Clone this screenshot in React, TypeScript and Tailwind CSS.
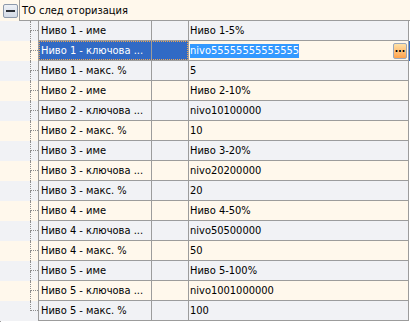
const rows = [
  { label: 'Ниво 1 - име', value: 'Ниво 1-5%' },
  { label: 'Ниво 1 - ключова ...', value: 'nivo55555555555555', editing: true },
  { label: 'Ниво 1 - макс. %', value: '5' },
  { label: 'Ниво 2 - име', value: 'Ниво 2-10%' },
  { label: 'Ниво 2 - ключова ...', value: 'nivo10100000' },
  { label: 'Ниво 2 - макс. %', value: '10' },
  { label: 'Ниво 3 - име', value: 'Ниво 3-20%' },
  { label: 'Ниво 3 - ключова ...', value: 'nivo20200000' },
  { label: 'Ниво 3 - макс. %', value: '20' },
  { label: 'Ниво 4 - име', value: 'Ниво 4-50%' },
  { label: 'Ниво 4 - ключова ...', value: 'nivo50500000' },
  { label: 'Ниво 4 - макс. %', value: '50' },
  { label: 'Ниво 5 - име', value: 'Ниво 5-100%' },
  { label: 'Ниво 5 - ключова ...', value: 'nivo1001000000' },
  { label: 'Ниво 5 - макс. %', value: '100' },
];

export default function App() {
  return (
    <div className="w-[410px] h-[322px] bg-white text-[11px] text-black font-['DejaVu_Sans_Condensed','DejaVu_Sans',sans-serif] leading-none overflow-hidden">
      {/* Category header */}
      <div className="flex h-[21px] bg-[#fff8ec]">
        <div className="w-[19px] pt-[4px] pl-[3px]">
          <div className="w-[15px] h-[14px] rounded-[2px] border border-[#8d99ab] bg-gradient-to-b from-[#eef1f6] to-[#d3dae6] flex items-center justify-center">
            <div className="w-[9px] h-[2px] bg-[#2b2f36]" />
          </div>
        </div>
        <div className="flex-1 border-l border-b border-[#9c9c9c] flex items-center pl-[2px]">
          ТО след оторизация
        </div>
      </div>

      {rows.map((row, i) => {
        const bg = i % 2 === 0 ? 'bg-[#f1f2f5]' : 'bg-[#fff8ec]';
        const last = i === rows.length - 1;
        return (
          <div key={i} className={`flex h-[20px] ${bg}`}>
            {/* tree lines */}
            <div className="w-[38px] flex">
              <div className="w-[30px]" />
              <div className="w-[8px] flex flex-col">
                <div className="h-[10px] border-l border-b border-dotted border-[#8c8c8c]" />
                <div className={`flex-1 ${last ? '' : 'border-l border-dotted border-[#8c8c8c]'}`} />
              </div>
            </div>

            {row.editing ? (
              <div className="relative flex">
                <div className="w-[113px] border-l border-b border-[#9c9c9c] bg-[#316ac5] text-white flex items-center pl-[2px] whitespace-nowrap overflow-hidden">
                  {row.label}
                </div>
                <div className="w-[37px] border-l border-b border-[#9c9c9c] bg-[#316ac5]" />
                <div className="absolute left-[1px] top-0 w-[149px] h-[19px] border border-dotted border-[#f0a650]" />
              </div>
            ) : (
              <>
                <div className="w-[113px] border-l border-b border-[#9c9c9c] flex items-center pl-[2px] whitespace-nowrap overflow-hidden">
                  {row.label}
                </div>
                <div className="w-[37px] border-l border-b border-[#9c9c9c]" />
              </>
            )}

            <div className="w-[221px] border-l border-r border-b border-[#9c9c9c] flex items-center pl-[1px] pr-[1px]">
              {row.editing ? (
                <>
                  <span className="bg-[#3399ff] text-white h-[14px] flex items-center">{row.value}</span>
                  <div className="ml-auto w-[14px] h-[16px] rounded-[2px] border border-[#9aa8bd] bg-gradient-to-b from-[#ffe2a8] to-[#ffa24a] flex items-center justify-center text-[10px] font-bold pb-[3px]">
                    ...
                  </div>
                </>
              ) : (
                row.value
              )}
            </div>
            <div className={`w-[1px] ${row.editing ? 'bg-[#316ac5]' : 'bg-white'}`} />
          </div>
        );
      })}
      <div className="h-[2px] border-l border-[#9c9c9c]" />
    </div>
  );
}
